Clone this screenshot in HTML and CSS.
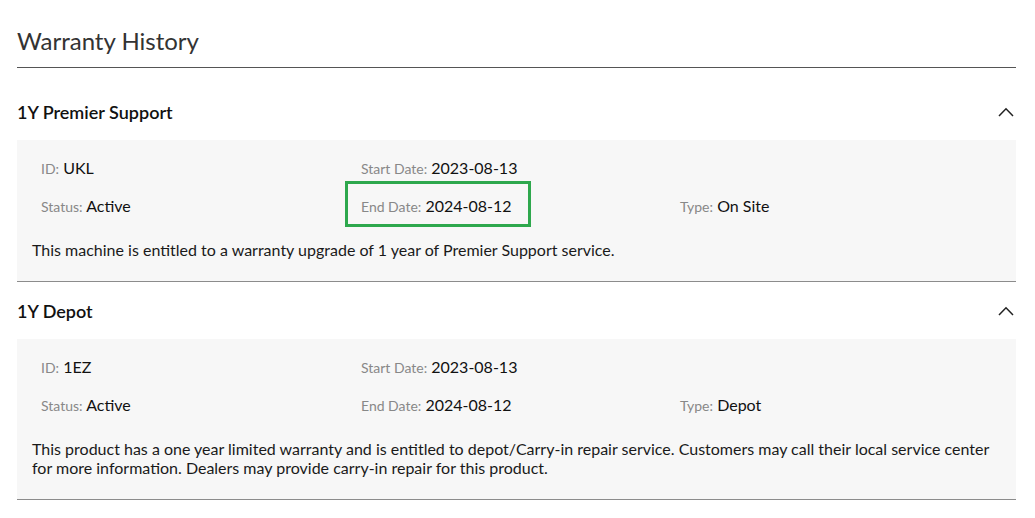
FILE: index.html
```html
<!DOCTYPE html>
<html lang="en">
<head>
<meta charset="utf-8">
<title>Warranty History</title>
<link rel="stylesheet" href="styles.css">
</head>
<body>
<div class="page">
  <h1 class="title">Warranty History</h1>

  <section class="warranty">
    <div class="warranty-head">
      <h2 class="warranty-name">1Y Premier Support</h2>
      <svg class="chevron" width="16" height="10" viewBox="0 0 16 10"><path d="M1 9 L8 1.8 L15 9" fill="none" stroke="#222" stroke-width="1.5"/></svg>
    </div>
    <div class="warranty-body">
      <div class="fields">
        <div class="field"><span class="label">ID:</span> <span class="value">UKL</span></div>
        <div class="field"><span class="label">Start Date:</span> <span class="value">2023-08-13</span></div>
        <div class="field"></div>
        <div class="field"><span class="label">Status:</span> <span class="value">Active</span></div>
        <div class="field highlighted"><span class="label">End Date:</span> <span class="value">2024-08-12</span><span class="highlight-box"></span></div>
        <div class="field"><span class="label">Type:</span> <span class="value">On Site</span></div>
      </div>
      <p class="desc">This machine is entitled to a warranty upgrade of 1 year of Premier Support service.</p>
    </div>
  </section>

  <section class="warranty">
    <div class="warranty-head">
      <h2 class="warranty-name">1Y Depot</h2>
      <svg class="chevron" width="16" height="10" viewBox="0 0 16 10"><path d="M1 9 L8 1.8 L15 9" fill="none" stroke="#222" stroke-width="1.5"/></svg>
    </div>
    <div class="warranty-body">
      <div class="fields">
        <div class="field"><span class="label">ID:</span> <span class="value">1EZ</span></div>
        <div class="field"><span class="label">Start Date:</span> <span class="value">2023-08-13</span></div>
        <div class="field"></div>
        <div class="field"><span class="label">Status:</span> <span class="value">Active</span></div>
        <div class="field"><span class="label">End Date:</span> <span class="value">2024-08-12</span></div>
        <div class="field"><span class="label">Type:</span> <span class="value">Depot</span></div>
      </div>
      <p class="desc">This product has a one year limited warranty and is entitled to depot/Carry-in repair service. Customers may call their local service center for more information. Dealers may provide carry-in repair for this product.</p>
    </div>
  </section>
</div>
</body>
</html>
```

FILE: styles.css
```css
* { box-sizing: border-box; }

body {
  margin: 0;
  background: #fff;
  font-family: Lato, "Open Sans", "Liberation Sans", sans-serif;
  color: #111;
}

.page {
  width: 999px;
  margin-left: 17px;
}

.title {
  margin: 0;
  padding-top: 26px;
  padding-bottom: 11px;
  height: 68px;
  font-size: 24px;
  line-height: 30px;
  font-weight: 400;
  color: #333;
  border-bottom: 1px solid #555;
}

.warranty:first-of-type { margin-top: 15px; }

.warranty-head {
  height: 57px;
  display: flex;
  align-items: center;
  justify-content: space-between;
  padding-right: 2px;
}

.warranty-name {
  margin: 0;
  font-size: 18px;
  font-weight: 600;
  color: #111;
}

.chevron { display: block; }

.warranty-body {
  background: #f7f7f7;
  border-bottom: 1px solid #8c8c8c;
  padding: 17px 15px 22px;
}

.fields {
  display: grid;
  grid-template-columns: 320px 319px 1fr;
  row-gap: 16px;
  padding-left: 9px;
}

.field {
  position: relative;
  line-height: 22px;
  height: 22px;
  font-size: 16px;
}

.label {
  font-size: 14px;
  color: #888;
}

.value { color: #111; }

.highlight-box {
  position: absolute;
  left: -16px;
  top: -14px;
  width: 186px;
  height: 46px;
  border: 3px solid #2ea84d;
}

.desc {
  margin: 23px 0 0;
  font-size: 16px;
  line-height: 19px;
  color: #1a1a1a;
}
```
